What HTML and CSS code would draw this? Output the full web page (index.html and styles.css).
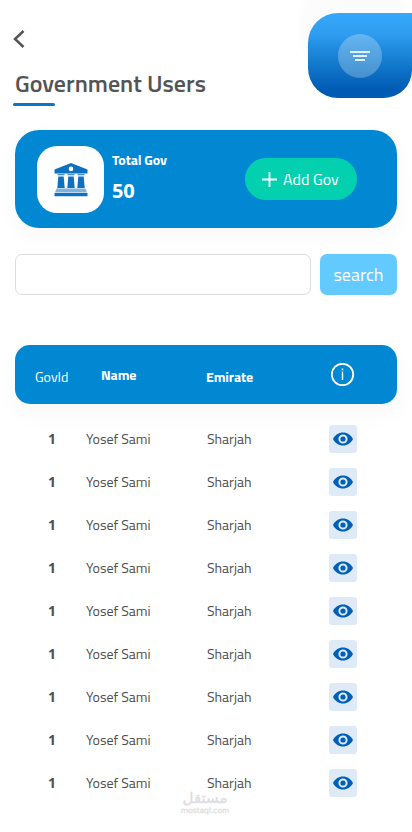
FILE: index.html
```
<!DOCTYPE html>
<html lang="en">
<head>
<meta charset="utf-8">
<meta name="viewport" content="width=device-width, initial-scale=1">
<title>Government Users</title>
<link rel="stylesheet" href="styles.css">
</head>
<body>
<svg width="0" height="0" class="defs" aria-hidden="true">
  <symbol id="eye" viewBox="0 0 20 14"><path fill="#005fb8" fill-rule="evenodd" d="M10 .5C5.600.5 2 3 0 7c2 4 5.600 6.500 10 6.500S18 11 20 7C18 3 14.400.5 10 .5ZM10 2.400a4.600 4.600 0 1 1 0 9.200 4.600 4.600 0 0 1 0-9.200ZM10 4.400a2.600 2.600 0 1 0 0 5.200 2.600 2.600 0 0 0 0-5.200Z"/></symbol>
</svg>
<main class="page">
  <header class="top">
    <div class="heading">
      <a class="back" href="#" aria-label="Back"><svg width="12" height="18" viewBox="0 0 12 18"><path d="M10.500 1 2 9l8.500 8" fill="none" stroke="#545454" stroke-width="2.500"/></svg></a>
      <h1>Government Users</h1>
      <div class="underline"></div>
    </div>
    <button class="menu" aria-label="Filter"><span class="menu-disc"><i class="bar b1"></i><i class="bar b2"></i><i class="bar b3"></i></span></button>
  </header>

  <section class="summary">
    <div class="bank">
      <svg width="34" height="34" viewBox="0 0 34 34">
        <g fill="#0e70c0">
          <path fill-rule="evenodd" d="M17 0 33.500 6.500V10.500H.5V6.500ZM17 3.600a2.300 2.300 0 1 0 0 4.600 2.300 2.300 0 0 0 0-4.600Z"/>
          <path d="M3.500 11.300h7v1h-7zM13.500 11.300h7v1h-7zM23.500 11.300h7v1h-7z"/>
          <path d="M4.300 13.400h5.400l1 11.600H3.300zM14.300 13.400h5.400l1 11.600h-7.400zM24.300 13.400h5.400l1 11.600h-7.400z"/>
          <path d="M.5 30h33v3.300H.5z"/>
        </g>
        <path fill="#7db1de" d="M2.500 25.400h29l1.500 4H1z"/>
      </svg>
    </div>
    <div class="total"><span class="label">Total Gov</span><strong>50</strong></div>
    <button class="add"><svg width="15" height="15" viewBox="0 0 15 15"><path d="M7.500 0v15M0 7.500h15" stroke="#fff" stroke-width="1.800"/></svg><span>Add Gov</span></button>
  </section>

  <form class="search"><input type="text" aria-label="Search"><button type="button">search</button></form>

  <section class="table">
    <div class="thead">
      <span class="h-id">GovId</span><span class="h-name">Name</span><span class="h-em">Emirate</span>
      <svg class="info" width="24" height="24" viewBox="0 0 24 24"><circle cx="11.500" cy="11.500" r="10.700" fill="none" stroke="#fff" stroke-width="1.800"/><path d="M11.500 8.500V17M11.500 5.500v1.700" stroke="#fff" stroke-width="1.400"/></svg>
    </div>
    <div class="rows">
      <div class="row"><b>1</b><span class="name">Yosef Sami</span><span class="em">Sharjah</span><a class="view"><svg><use href="#eye"/></svg></a></div>
      <div class="row"><b>1</b><span class="name">Yosef Sami</span><span class="em">Sharjah</span><a class="view"><svg><use href="#eye"/></svg></a></div>
      <div class="row"><b>1</b><span class="name">Yosef Sami</span><span class="em">Sharjah</span><a class="view"><svg><use href="#eye"/></svg></a></div>
      <div class="row"><b>1</b><span class="name">Yosef Sami</span><span class="em">Sharjah</span><a class="view"><svg><use href="#eye"/></svg></a></div>
      <div class="row"><b>1</b><span class="name">Yosef Sami</span><span class="em">Sharjah</span><a class="view"><svg><use href="#eye"/></svg></a></div>
      <div class="row"><b>1</b><span class="name">Yosef Sami</span><span class="em">Sharjah</span><a class="view"><svg><use href="#eye"/></svg></a></div>
      <div class="row"><b>1</b><span class="name">Yosef Sami</span><span class="em">Sharjah</span><a class="view"><svg><use href="#eye"/></svg></a></div>
      <div class="row"><b>1</b><span class="name">Yosef Sami</span><span class="em">Sharjah</span><a class="view"><svg><use href="#eye"/></svg></a></div>
      <div class="row"><b>1</b><span class="name">Yosef Sami</span><span class="em">Sharjah</span><a class="view"><svg><use href="#eye"/></svg></a></div>
    </div>
  </section>
  <div class="watermark"><span class="ar" lang="ar" dir="rtl">مستقل</span><span class="lat">mostaql.com</span></div>
</main>
</body>
</html>
```
FILE: styles.css
```
* { box-sizing: border-box; }
body {
  margin: 0;
  background: #fff;
  color: #505050;
  font-family: "Titillium Web", Roboto, "Noto Sans", sans-serif;
  overflow: hidden;
}
button { border: 0; padding: 0; font: inherit; color: #fff; }
svg { display: block; flex: none; }
.defs { position: absolute; }
.page { position: relative; width: 412px; height: 832px; padding: 0 15px; }

.top { display: flex; justify-content: space-between; height: 130px; padding-top: 13px; margin-right: -15px; }
.heading { padding-top: 17px; }
.back { display: block; width: 12px; height: 18px; margin-left: -2px; }
h1 { margin: 19px 0 0; height: 32px; line-height: 32px; font-size: 24px; font-weight: 600; white-space: nowrap; color: #545454; }
.underline { width: 42px; height: 3px; margin: 3.500px 0 0 -2px; border-radius: 2px; background: #0a78c8; }
.menu {
  display: flex; justify-content: center; width: 104px; height: 85px; padding-top: 21px;
  border-radius: 30px 0 28px 30px;
  background: linear-gradient(#36a8fb 0%, #2f9df0 24%, #127acd 60%, #005bb4 90%);
  box-shadow: -8px -28px 3px rgba(0, 0, 0, .01);
}
.menu-disc {
  display: flex; flex-direction: column; align-items: center; gap: 2px;
  width: 44px; height: 44px; padding-top: 17px; border-radius: 50%;
  background: rgba(255, 255, 255, .26);
}
.bar { height: 2px; background: #e2f1fc; }
.b1 { width: 20px; }
.b2 { width: 14px; }
.b3 { width: 10px; }

.summary {
  display: flex; align-items: flex-start; height: 98px; padding: 16px 40px 0 22px;
  border-radius: 24px; background: #0288d3; color: #fff;
  box-shadow: 0 8px 22px rgba(0, 0, 0, .03);
}
.bank { display: grid; place-items: center; width: 67px; height: 67px; border-radius: 20px; background: #fff; }
.total { display: flex; flex-direction: column; padding: 4px 0 0 8px; }
.label { height: 20px; line-height: 20px; font-size: 14px; font-weight: 700; letter-spacing: -.1px; }
.total strong { height: 28px; margin-top: 7px; line-height: 28px; font-family: "Open Sans", "Noto Sans", sans-serif; font-size: 20px; font-weight: 700; letter-spacing: -.3px; }
.add {
  display: flex; align-items: center; gap: 6px; width: 112px; height: 42px;
  margin: 12px 0 0 auto; padding-left: 17px; border-radius: 21px; background: #03d0ae;
}
.add span { font-size: 16px; white-space: nowrap; }

.search { display: flex; gap: 9px; margin-top: 26px; }
.search input { width: 296px; height: 41px; border: 1px solid #dcdcdc; border-radius: 7px; background: #fff; }
.search button { width: 77px; height: 41px; border-radius: 7px; background: #63caff; font-size: 18px; }

.table { margin-top: 50px; }
.thead {
  display: grid; grid-template-columns: 66px 105px 125px 24px; height: 59px; padding: 17px 0 0 20px;
  border-radius: 15px; background: #0288d3; color: #fff;
  font-size: 14px; line-height: 24px; box-shadow: 0 10px 24px rgba(0, 0, 0, .03);
}
.h-id { padding-top: 3px; }
.h-name { font-weight: 700; padding-top: 1px; letter-spacing: -.1px; }
.h-em { font-weight: 700; padding-top: 3px; letter-spacing: -.1px; }
.info { margin-top: 1px; }
.rows { display: grid; gap: 15px; padding: 21px 0 0 33px; }
.row { display: grid; grid-template-columns: 38px 121px 122px 28px; align-items: center; height: 28px; font-size: 14px; line-height: 28px; }
.row b { font-family: "Open Sans", "Noto Sans", sans-serif; font-size: 14px; font-weight: 700; }
.view { display: grid; place-items: center; width: 28px; height: 28px; border-radius: 3px; background: #deeaf6; }
.view svg { width: 20px; height: 14px; }

.watermark {
  position: absolute; left: 180px; top: 790px; display: flex; flex-direction: column; align-items: center;
  width: 50px; color: #dedede; font-family: "DejaVu Sans", sans-serif;
}
.ar { height: 16px; line-height: 16px; font-size: 15px; font-weight: 400; white-space: nowrap; -webkit-text-stroke: .4px #dedede; }
.lat { height: 8px; margin-top: 1px; line-height: 8px; font-size: 7.500px; font-weight: 400; white-space: nowrap; -webkit-text-stroke: .3px #dedede; }
```
